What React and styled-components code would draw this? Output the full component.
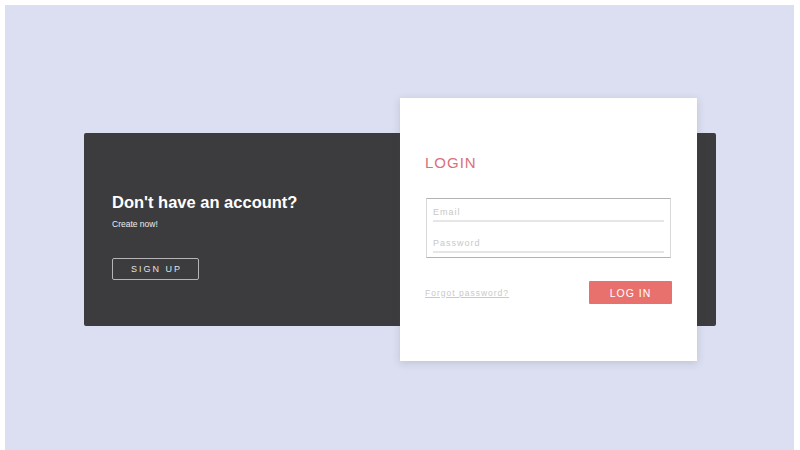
import React from 'react';
import styled, { createGlobalStyle } from 'styled-components';

const GlobalStyle = createGlobalStyle`
    html, body {
        margin: 0;
        padding: 0;
        background: #ffffff;
        font-family: "Liberation Sans", Arial, sans-serif;
    }
    * {
        box-sizing: border-box;
    }
`;

const Page = styled.div`
    margin: 5px 6px 0 5px;
    height: 449px;
    background: #dcdff1;
    display: flex;
    align-items: center;
    justify-content: center;
`;

const Stage = styled.div`
    display: grid;
    width: 632px;
    margin-left: 1px;
`;

const DarkPanel = styled.div`
    grid-area: 1 / 1;
    align-self: center;
    height: 193px;
    background: #3c3b3d;
    border-radius: 2px;
    padding: 60px 28px 0;
    color: #ffffff;
`;

const Heading = styled.h2`
    margin: 0;
    font-size: 16.5px;
    line-height: 19px;
    font-weight: 700;
`;

const SubText = styled.p`
    margin: 7px 0 0;
    font-size: 8.5px;
    line-height: 10px;
    color: #eeeeee;
`;

const OutlineButton = styled.button`
    margin-top: 29px;
    width: 87px;
    height: 22px;
    background: transparent;
    border: 1px solid #b5b5b5;
    border-radius: 2px;
    color: #e2e2e2;
    font-family: inherit;
    font-size: 9px;
    letter-spacing: 2px;
    padding: 0 0 0 2px;
`;

const Card = styled.div`
    grid-area: 1 / 1;
    justify-self: end;
    margin-right: 19px;
    width: 297px;
    height: 263px;
    background: #ffffff;
    box-shadow: 0 2px 8px rgba(60, 60, 90, 0.18);
    padding: 56px 25px 0;
`;

const Title = styled.h1`
    margin: 0;
    font-size: 15px;
    line-height: 17px;
    font-weight: 400;
    letter-spacing: 1px;
    color: #d9717b;
`;

const Fields = styled.div`
    margin: 27px 1px 0 1px;
    border-top: 1px solid #b3b3b3;
    border-bottom: 1px solid #b3b3b3;
    border-left: 1px solid #d9d9d9;
    border-right: 1px solid #d9d9d9;
    padding: 4px 6px 4px 6px;
    display: flex;
    flex-direction: column;
    gap: 12px;
`;

const Input = styled.input`
    display: block;
    width: 100%;
    height: 19px;
    border: none;
    border-bottom: 2px solid #e6e6e6;
    outline: none;
    padding: 1px 0 0;
    font-family: inherit;
    font-size: 9px;
    letter-spacing: 1px;
    color: #555;
    background: transparent;

    &::placeholder {
        color: #c8c8c8;
    }
`;

const Actions = styled.div`
    margin-top: 23px;
    display: flex;
    align-items: center;
    justify-content: space-between;
`;

const ForgotLink = styled.a`
    font-size: 8.5px;
    letter-spacing: 1px;
    color: #c9c9c9;
    text-decoration: underline;
    cursor: pointer;
`;

const LoginButton = styled.button`
    width: 83px;
    height: 23px;
    background: #e8716d;
    border: none;
    border-radius: 1px;
    color: #ffffff;
    font-family: inherit;
    font-size: 10.5px;
    letter-spacing: 1px;
    padding: 0;
`;

const App = () => {
    return (
        <>
            <GlobalStyle />
            <Page>
                <Stage>
                    <DarkPanel>
                        <Heading>Don't have an account?</Heading>
                        <SubText>Create now!</SubText>
                        <OutlineButton>SIGN UP</OutlineButton>
                    </DarkPanel>
                    <Card>
                        <Title>LOGIN</Title>
                        <Fields>
                            <Input type="email" placeholder="Email" />
                            <Input type="password" placeholder="Password" />
                        </Fields>
                        <Actions>
                            <ForgotLink>Forgot password?</ForgotLink>
                            <LoginButton>LOG IN</LoginButton>
                        </Actions>
                    </Card>
                </Stage>
            </Page>
        </>
    );
};

export default App;
